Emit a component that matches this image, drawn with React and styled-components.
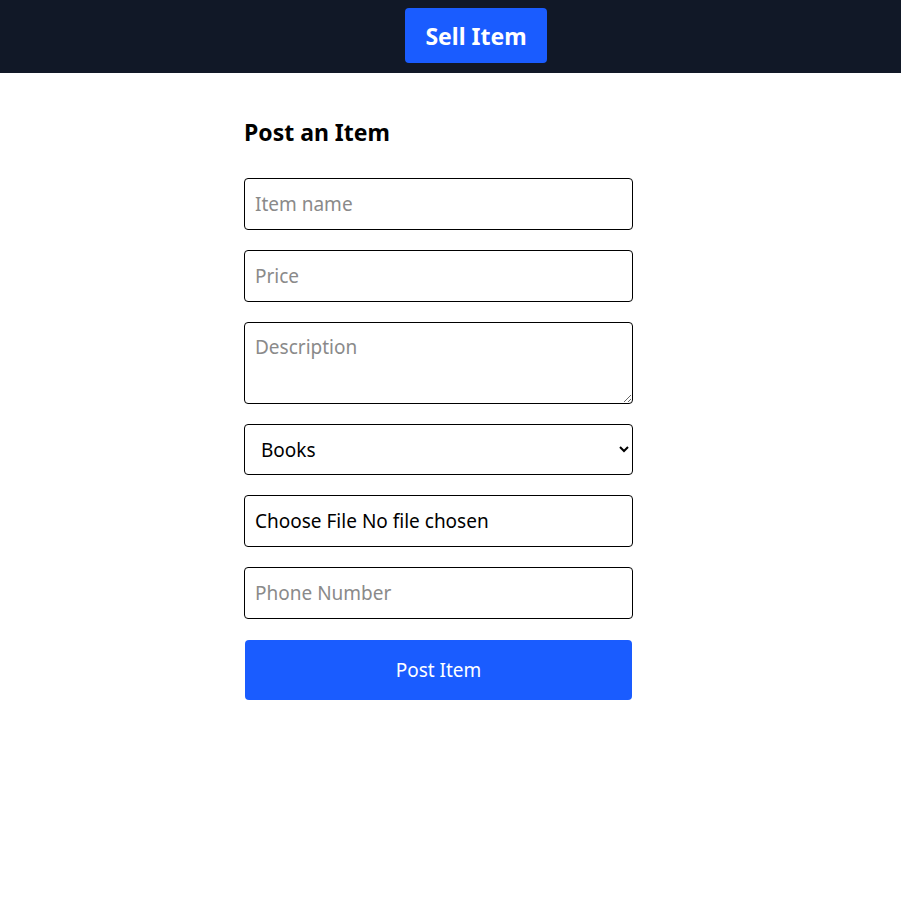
import React from 'react';
import styled, { createGlobalStyle } from 'styled-components';

const GlobalStyle = createGlobalStyle`
  body {
    margin: 0;
    background: #fff;
    font-family: "Noto Sans", "Open Sans", sans-serif;
  }
  * { box-sizing: border-box; }
`;

const Header = styled.header`
  height: 73px;
  background: #111827;
  display: flex;
  justify-content: center;
  align-items: flex-start;
  padding: 8px 0 0 51px;
`;

const SellButton = styled.button`
  width: 142px;
  height: 55px;
  border: none;
  border-radius: 4px;
  background: #1a5cff;
  color: #fff;
  font-family: inherit;
  font-size: 23px;
  font-weight: 700;
  padding-top: 2px;
  cursor: pointer;
`;

const Main = styled.main`
  padding: 43px 0 0 244px;
`;

const Form = styled.form`
  width: 389px;
  display: flex;
  flex-direction: column;
  gap: 20px;
`;

const Title = styled.h2`
  margin: 0 0 10px;
  font-size: 23px;
  font-weight: 700;
  color: #000;
`;

const fieldBase = `
  width: 100%;
  border: 1px solid #000;
  border-radius: 4px;
  background: #fff;
  font-family: inherit;
  font-size: 19px;
  color: #000;
  padding: 0 10px;
  outline: none;
  &::placeholder { color: #8a8a8a; }
`;

const Input = styled.input`
  ${fieldBase}
  height: 52px;
`;

const TextArea = styled.textarea`
  ${fieldBase}
  height: 82px;
  padding-top: 11px;
  resize: vertical;
`;

const Select = styled.select`
  ${fieldBase}
  height: 51px;
  padding-left: 12px;
`;

const FileInput = styled.input`
  ${fieldBase}
  height: 52px;
  line-height: 50px;
  &::file-selector-button {
    border: none;
    background: none;
    padding: 0;
    margin-right: 5px;
    font-family: inherit;
    font-size: 19px;
    color: #000;
  }
`;

const PostButton = styled.button`
  height: 60px;
  margin: 1px 1px 0;
  border: none;
  border-radius: 4px;
  background: #1a5cff;
  color: #fff;
  font-family: inherit;
  font-size: 19px;
  cursor: pointer;
`;

export default function App() {
  return (
    <>
      <GlobalStyle />
      <Header>
        <SellButton>Sell Item</SellButton>
      </Header>
      <Main>
        <Form onSubmit={e => e.preventDefault()}>
          <Title>Post an Item</Title>
          <Input placeholder='Item name' />
          <Input placeholder='Price' />
          <TextArea placeholder='Description' />
          <Select defaultValue='Books'>
            <option>Books</option>
            <option>Electronics</option>
            <option>Furniture</option>
            <option>Clothing</option>
          </Select>
          <FileInput type='file' />
          <Input placeholder='Phone Number' />
          <PostButton type='submit'>Post Item</PostButton>
        </Form>
      </Main>
    </>
  );
}
